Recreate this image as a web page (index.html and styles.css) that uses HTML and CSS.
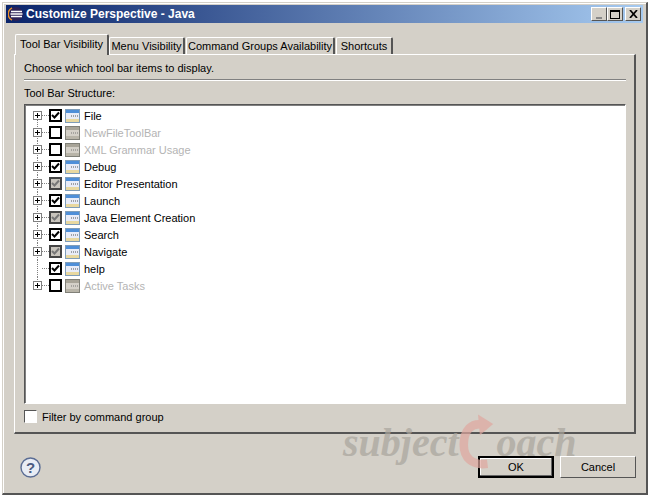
FILE: index.html
```html
<!DOCTYPE html>
<html lang="en">
<head>
    <meta charset="UTF-8">
    <title>Customize Perspective - Java</title>
    <link rel="stylesheet" href="styles.css">
</head>
<body>
    <svg class="defs" width="0" height="0">
        <symbol id="bar" viewBox="0 0 15 14">
            <rect x="0.5" y="0.5" width="14" height="13" fill="#e8ecf8" stroke="#7f9db9"/>
            <rect x="1" y="1" width="13" height="3" fill="#4f8fd8"/>
            <rect x="1" y="10" width="13" height="3" fill="#e8d8a0"/>
            <path d="M6 7h1M8 7h1M10 7h1M12 7h1" stroke="#555" fill="none"/>
        </symbol>
        <symbol id="bar-off" viewBox="0 0 15 14">
            <rect x="0.5" y="0.5" width="14" height="13" fill="#d4d0c8" stroke="#808078"/>
            <rect x="1" y="1" width="13" height="3" fill="#a8a498"/>
            <rect x="1" y="10" width="13" height="3" fill="#b8b4a8"/>
            <path d="M6 7h1M8 7h1M10 7h1M12 7h1" stroke="#777" fill="none"/>
        </symbol>
        <symbol id="tick" viewBox="0 0 9 9">
            <path d="M1 4l2.5 2.5L8 1.5" fill="none" stroke="currentColor" stroke-width="2"/>
        </symbol>
    </svg>

    <div class="window">
        <div class="titlebar">
            <svg class="app-icon" width="16" height="16" viewBox="0 0 16 16">
                <circle cx="8" cy="8" r="7" fill="#2c2255"/>
                <path d="M4 1.8A7 7 0 0 0 4 14.2" fill="none" stroke="#e8902c" stroke-width="1.5"/>
                <path d="M3 5.5h11M2.5 8h12M3 10.5h11" stroke="#fff" stroke-width="1.4"/>
            </svg>
            <span class="title">Customize Perspective - Java</span>
            <div class="win-buttons">
                <button class="win-btn"><span class="min-mark"></span></button>
                <button class="win-btn"><span class="max-mark"></span></button>
                <button class="win-btn close-btn">
                    <svg width="9" height="8" viewBox="0 0 9 8"><path d="M1 0l7 8M8 0l-7 8" stroke="#000" stroke-width="1.7" fill="none"/></svg>
                </button>
            </div>
        </div>

        <div class="tabs">
            <div class="tab active">Tool Bar Visibility</div>
            <div class="tab tab-menu">Menu Visibility</div>
            <div class="tab tab-command">Command Groups Availability</div>
            <div class="tab tab-shortcuts">Shortcuts</div>
        </div>

        <div class="panel">
            <p class="hint">Choose which tool bar items to display.</p>
            <div class="separator"></div>
            <p class="tree-label">Tool Bar Structure:</p>

            <div class="tree">
                <div class="row">
                    <span class="twist"><span class="plus"></span></span><span class="dots"></span>
                    <span class="check"><svg width="9" height="9"><use href="#tick"/></svg></span>
                    <svg class="bar-icon"><use href="#bar"/></svg>
                    <span class="label">File</span>
                </div>
                <div class="row off">
                    <span class="twist"><span class="plus"></span></span><span class="dots"></span>
                    <span class="check"></span>
                    <svg class="bar-icon"><use href="#bar-off"/></svg>
                    <span class="label">NewFileToolBar</span>
                </div>
                <div class="row off">
                    <span class="twist"><span class="plus"></span></span><span class="dots"></span>
                    <span class="check"></span>
                    <svg class="bar-icon"><use href="#bar-off"/></svg>
                    <span class="label">XML Grammar Usage</span>
                </div>
                <div class="row">
                    <span class="twist"><span class="plus"></span></span><span class="dots"></span>
                    <span class="check"><svg width="9" height="9"><use href="#tick"/></svg></span>
                    <svg class="bar-icon"><use href="#bar"/></svg>
                    <span class="label">Debug</span>
                </div>
                <div class="row">
                    <span class="twist"><span class="plus"></span></span><span class="dots"></span>
                    <span class="check partial"><svg width="9" height="9"><use href="#tick"/></svg></span>
                    <svg class="bar-icon"><use href="#bar"/></svg>
                    <span class="label">Editor Presentation</span>
                </div>
                <div class="row">
                    <span class="twist"><span class="plus"></span></span><span class="dots"></span>
                    <span class="check"><svg width="9" height="9"><use href="#tick"/></svg></span>
                    <svg class="bar-icon"><use href="#bar"/></svg>
                    <span class="label">Launch</span>
                </div>
                <div class="row">
                    <span class="twist"><span class="plus"></span></span><span class="dots"></span>
                    <span class="check partial"><svg width="9" height="9"><use href="#tick"/></svg></span>
                    <svg class="bar-icon"><use href="#bar"/></svg>
                    <span class="label">Java Element Creation</span>
                </div>
                <div class="row">
                    <span class="twist"><span class="plus"></span></span><span class="dots"></span>
                    <span class="check"><svg width="9" height="9"><use href="#tick"/></svg></span>
                    <svg class="bar-icon"><use href="#bar"/></svg>
                    <span class="label">Search</span>
                </div>
                <div class="row">
                    <span class="twist"><span class="plus"></span></span><span class="dots"></span>
                    <span class="check partial"><svg width="9" height="9"><use href="#tick"/></svg></span>
                    <svg class="bar-icon"><use href="#bar"/></svg>
                    <span class="label">Navigate</span>
                </div>
                <div class="row">
                    <span class="twist"></span><span class="dots"></span>
                    <span class="check"><svg width="9" height="9"><use href="#tick"/></svg></span>
                    <svg class="bar-icon"><use href="#bar"/></svg>
                    <span class="label">help</span>
                </div>
                <div class="row off last">
                    <span class="twist"><span class="plus"></span></span><span class="dots"></span>
                    <span class="check"></span>
                    <svg class="bar-icon"><use href="#bar-off"/></svg>
                    <span class="label">Active Tasks</span>
                </div>
            </div>

            <div class="filter">
                <span class="filter-box"></span>
                <span>Filter by command group</span>
            </div>
        </div>

        <div class="footer">
            <svg class="help" width="21" height="21" viewBox="0 0 21 21">
                <circle cx="10.5" cy="10.5" r="9.5" fill="#e8ecf4" stroke="#5a6c94" stroke-width="1.4"/>
                <text x="10.5" y="16" text-anchor="middle" class="help-mark">?</text>
            </svg>
            <div class="actions">
                <button class="btn default">OK</button>
                <button class="btn">Cancel</button>
            </div>
        </div>

        <div class="watermark">
            <span>subject</span>
            <svg width="38" height="62" viewBox="0 0 40 62">
                <path d="M30 14C12 8 5 20 5 34C5 48 14 56 30 54" fill="none" stroke="#e0a8a0" stroke-width="9"/>
                <path d="M20 2L36 12L22 24Z" fill="#e0a8a0"/>
            </svg>
            <span>oach</span>
        </div>
    </div>
</body>
</html>
```

FILE: styles.css
```css
html, body {
    margin: 0;
    height: 100%;
}
body {
    background-color: #fff;
    font-family: "Liberation Sans", Arial, sans-serif;
    font-size: 11px;
    color: #000;
    overflow: hidden;
}
.defs {
    position: absolute;
}
.window {
    position: relative;
    box-sizing: border-box;
    width: 646px;
    height: 493px;
    margin: 2px 0 0 2px;
    background-color: #d4d0c8;
    border: 1px solid #d4d0c8;
    border-right: 2px solid #555;
    border-bottom: 2px solid #555;
    box-shadow: inset 1px 1px 0 #fff;
    padding: 2px 3px 0 3px;
}
.titlebar {
    display: flex;
    align-items: center;
    height: 18px;
    padding: 0 2px;
    background: linear-gradient(to right, #0a246a, #a6caf0);
}
.app-icon {
    margin-right: 2px;
}
.title {
    color: #fff;
    font-weight: bold;
    font-size: 12px;
}
.win-buttons {
    display: flex;
    margin-left: auto;
}
.win-btn {
    display: flex;
    align-items: center;
    justify-content: center;
    box-sizing: border-box;
    width: 16px;
    height: 14px;
    padding: 0;
    background-color: #d4d0c8;
    border: 1px solid;
    border-color: #fff #555 #555 #fff;
}
.close-btn {
    margin-left: 2px;
}
.min-mark {
    width: 6px;
    height: 2px;
    margin-top: 7px;
    background-color: #888;
}
.max-mark {
    box-sizing: border-box;
    width: 10px;
    height: 9px;
    border: 1px solid #000;
    border-top-width: 2px;
}
.tabs {
    display: flex;
    align-items: flex-end;
    height: 20px;
    margin: 11px 0 0 9px;
}
.tab {
    box-sizing: border-box;
    height: 17px;
    line-height: 16px;
    text-align: center;
    background-color: #d4d0c8;
    border: 1px solid #fff;
    border-bottom: none;
    border-right: 2px solid #555;
    border-radius: 2px 2px 0 0;
    white-space: nowrap;
}
.tab.active {
    position: relative;
    z-index: 1;
    width: 94px;
    height: 21px;
    line-height: 18px;
    margin-bottom: -1px;
}
.tab-menu {
    width: 76px;
    margin-right: 1px;
}
.tab-command {
    width: 149px;
    margin-right: 1px;
}
.tab-shortcuts {
    width: 57px;
}
.panel {
    box-sizing: border-box;
    width: 622px;
    height: 380px;
    margin-left: 8px;
    padding: 6px 8px 0 9px;
    border: 1px solid #fff;
    border-right: 2px solid #555;
    border-bottom: 2px solid #555;
}
.hint {
    margin: 0;
    line-height: 15px;
}
.separator {
    height: 0;
    margin-top: 3px;
    border-top: 1px solid #808080;
    border-bottom: 1px solid #fff;
}
.tree-label {
    margin: 5px 0 3px 0;
    line-height: 15px;
}
.tree {
    box-sizing: border-box;
    height: 300px;
    padding-top: 2px;
    background-color: #fff;
    border: 1px solid;
    border-color: #555 #fff #fff #555;
    box-shadow: inset 1px 1px 0 #808080;
}
.row {
    display: flex;
    align-items: center;
    height: 17px;
}
.twist {
    display: flex;
    align-items: center;
    justify-content: center;
    box-sizing: border-box;
    width: 9px;
    height: 17px;
    margin-left: 8px;
    background-image: repeating-linear-gradient(to bottom, #808080 0, #808080 1px, transparent 1px, transparent 2px);
    background-size: 1px 100%;
    background-position: center;
    background-repeat: no-repeat;
}
.row:first-child .twist {
    background-size: 1px 50%;
    background-position: center bottom;
}
.row.last .twist {
    background-size: 1px 50%;
    background-position: center top;
}
.plus {
    position: relative;
    box-sizing: border-box;
    width: 9px;
    height: 9px;
    background-color: #fff;
    border: 1px solid #808080;
}
.plus::before,
.plus::after {
    content: "";
    position: absolute;
    background-color: #000;
}
.plus::before {
    left: 1px;
    top: 3px;
    width: 5px;
    height: 1px;
}
.plus::after {
    left: 3px;
    top: 1px;
    width: 1px;
    height: 5px;
}
.dots {
    width: 7px;
    height: 1px;
    background-image: repeating-linear-gradient(to right, #808080 0, #808080 1px, transparent 1px, transparent 2px);
}
.check {
    display: flex;
    align-items: center;
    justify-content: center;
    box-sizing: border-box;
    width: 13px;
    height: 13px;
    background-color: #fff;
    border: 2px solid #000;
    color: #000;
}
.check.partial {
    background-color: #c8c4bc;
    border-color: #444;
    color: #777;
}
.bar-icon {
    width: 15px;
    height: 14px;
    margin: 0 4px 0 3px;
}
.row.off .label {
    color: #b4b4b4;
}
.filter {
    display: flex;
    align-items: center;
    gap: 5px;
    margin-top: 6px;
}
.filter-box {
    box-sizing: border-box;
    width: 13px;
    height: 13px;
    background-color: #fff;
    border: 1px solid;
    border-color: #555 #fff #fff #555;
}
.footer {
    display: flex;
    align-items: center;
    justify-content: space-between;
    height: 22px;
    margin-top: 22px;
    padding: 0 7px 0 14px;
}
.help-mark {
    font-family: "Liberation Sans", Arial, sans-serif;
    font-size: 15px;
    font-weight: bold;
    fill: #4a5a80;
}
.actions {
    display: flex;
    gap: 6px;
}
.btn {
    box-sizing: border-box;
    width: 76px;
    height: 22px;
    padding: 0;
    font: inherit;
    background-color: #d4d0c8;
    border: 1px solid;
    border-color: #fff #555 #555 #fff;
}
.btn.default {
    border: 2px solid #000;
    outline: none;
    box-shadow: inset -1px -1px 0 #666, inset 1px 1px 0 #fff;
}
.watermark {
    position: absolute;
    left: 340px;
    top: 408px;
    display: flex;
    align-items: center;
    font-family: "Liberation Serif", serif;
    font-style: italic;
    font-weight: bold;
    font-size: 40px;
    color: #a8a49c;
    opacity: 0.7;
    pointer-events: none;
}
```
